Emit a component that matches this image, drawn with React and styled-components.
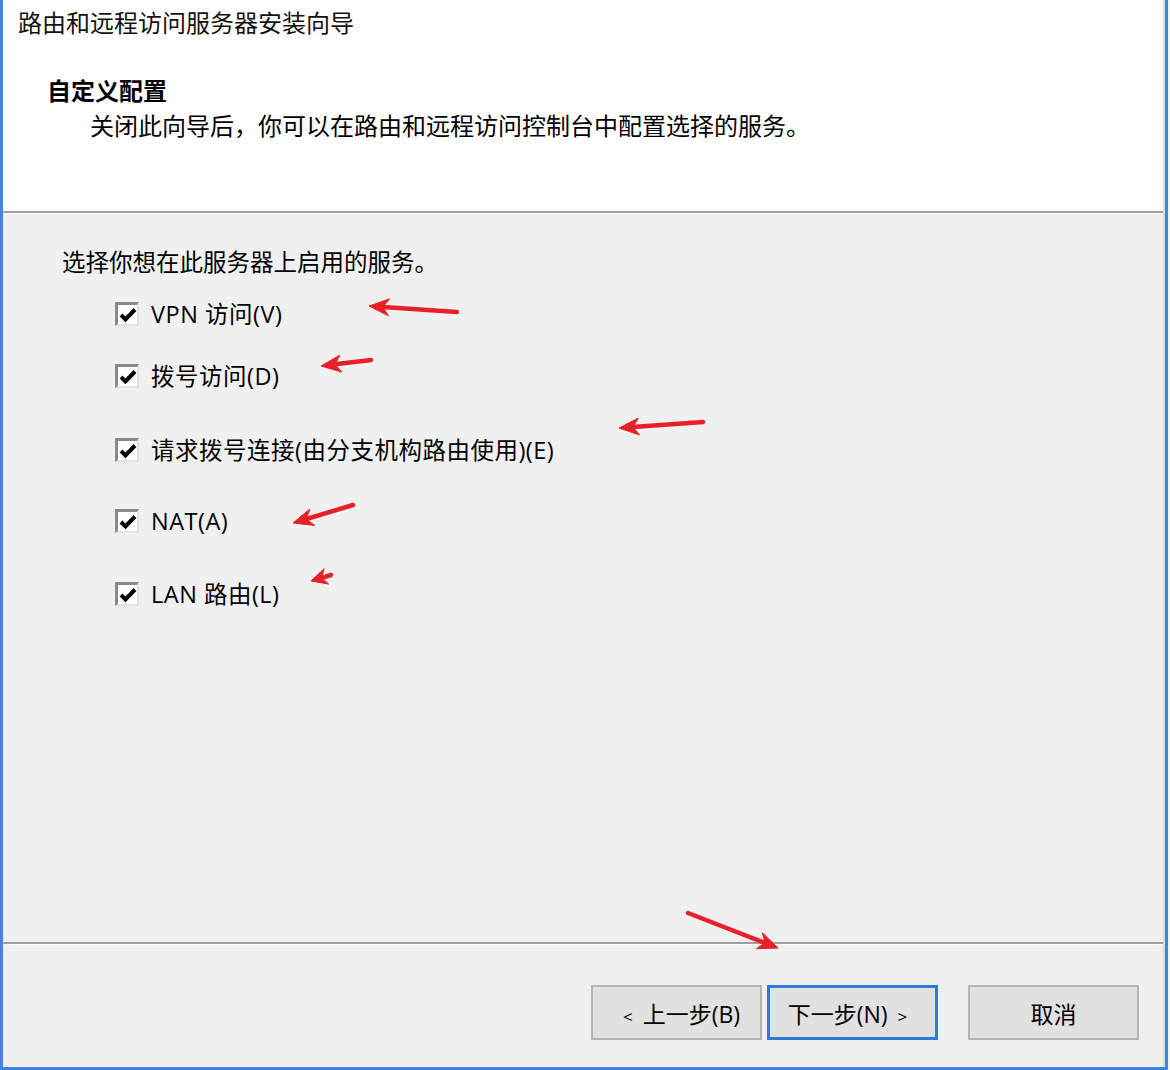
import React from "react";
import styled, { createGlobalStyle } from "styled-components";

const GlobalStyle = createGlobalStyle`
  * {
    box-sizing: border-box;
  }
  html, body {
    margin: 0;
    padding: 0;
    background: #f4f4f4;
  }
  body {
    font-family: "Open Sans", "Noto Sans CJK SC", sans-serif;
    color: #000;
  }
`;

/* 窗口外框 */
const Window = styled.div`
  position: relative;
  width: 1168px;
  height: 1070px;
  display: flex;
  flex-direction: column;
  border-left: 3px solid #3f86dc;
  border-right: 3px solid #3f86dc;
  border-bottom: 3px solid #3f86dc;
  background: #f0f0f0;
`;

const Inner = styled.div`
  flex: 1;
  display: flex;
  flex-direction: column;
  border-right: 2px solid #dcdcdc;
`;

/* 上部白色区域 */
const Header = styled.header`
  height: 211px;
  background: #fff;
  padding: 8px 0 0 15px;
  font-size: 24px;
  line-height: 30px;

  .title {
    color: #111;
  }

  h2 {
    margin: 38px 0 0 29px;
    font-size: 24px;
    font-weight: bold;
    line-height: 30px;
  }

  p {
    margin: 5px 0 0 72px;
  }
`;

const Divider = styled.div`
  height: 3px;
  border-top: 2px solid #a0a0a0;
  border-bottom: 1px solid #fff;
`;

const Body = styled.main`
  flex: 1;
  padding: 33px 0 0 59px;
  font-size: 23.5px;
  line-height: 30px;
`;

const Row = styled.label`
  display: flex;
  align-items: center;
  gap: 12px;
  margin: ${(p) => p.$top}px 0 0 53px;
  height: 30px;
  letter-spacing: 0.5px;
`;

const Box = styled.span`
  width: 24px;
  height: 24px;
  display: flex;
  align-items: center;
  justify-content: center;
  background: #fff;
  border-top: 3px solid #8a8a8a;
  border-left: 3px solid #8a8a8a;
  border-right: 2px solid #e3e3e3;
  border-bottom: 2px solid #e3e3e3;
`;

const Footer = styled.footer`
  height: 122px;
  display: flex;
  justify-content: flex-end;
  align-items: flex-start;
  padding: 40px 24px 0 0;
`;

const Button = styled.button`
  width: 171px;
  height: 55px;
  margin-left: ${(p) => p.$gap}px;
  background: #e1e1e1;
  border: ${(p) => (p.$primary ? "3px solid #2f7ad6" : "2px solid #b4b4b4")};
  font-family: inherit;
  font-size: 23px;
  color: #000;
  padding: 0;

  .angle {
    font-size: 17px;
    margin: 0 10px;
  }
`;

const Notes = styled.svg`
  position: absolute;
  left: -3px;
  top: 0;
  pointer-events: none;
`;

function Check() {
  return (
    <Box>
      <svg width="18" height="16" viewBox="0 0 18 16">
        <path d="M2 8 L6.5 12.5 L16 2.5" fill="none" stroke="#000" strokeWidth="4" />
      </svg>
    </Box>
  );
}

function Arrow({ x1, y1, x2, y2, head = 20, w = 8.5 }) {
  const dx = x2 - x1;
  const dy = y2 - y1;
  const len = Math.hypot(dx, dy);
  const ux = dx / len;
  const uy = dy / len;
  const px = -uy;
  const py = ux;
  const bx = x2 - ux * head;
  const by = y2 - uy * head;
  const nx = x2 - ux * head * 0.7;
  const ny = y2 - uy * head * 0.7;
  const pts = [
    [x2, y2],
    [bx + px * w, by + py * w],
    [nx, ny],
    [bx - px * w, by - py * w],
  ]
    .map((p) => p.join(","))
    .join(" ");
  return (
    <g fill="#e8202a" stroke="#e8202a">
      {len > head && (
        <line x1={x1} y1={y1} x2={nx} y2={ny} strokeWidth="4.5" strokeLinecap="round" />
      )}
      <polygon points={pts} strokeWidth="1" strokeLinejoin="round" />
    </g>
  );
}

const services = [
  { top: 22, text: "VPN 访问(V)" },
  { top: 32, text: "拨号访问(D)" },
  { top: 44, text: "请求拨号连接(由分支机构路由使用)(E)" },
  { top: 41, text: "NAT(A)" },
  { top: 43, text: "LAN 路由(L)" },
];

export default function App() {
  return (
    <>
      <GlobalStyle />
      <Window>
        <Inner>
          <Header>
            <div className="title">路由和远程访问服务器安装向导</div>
            <h2>自定义配置</h2>
            <p>关闭此向导后，你可以在路由和远程访问控制台中配置选择的服务。</p>
          </Header>
          <Divider />
          <Body>
            <div>选择你想在此服务器上启用的服务。</div>
            {services.map((s) => (
              <Row key={s.text} $top={s.top}>
                <Check />
                <span>{s.text}</span>
              </Row>
            ))}
          </Body>
          <Divider />
          <Footer>
            <Button $gap={0}>
              <span className="angle">&lt;</span>上一步(B)
            </Button>
            <Button $gap={5} $primary>
              下一步(N)<span className="angle">&gt;</span>
            </Button>
            <Button $gap={30}>取消</Button>
          </Footer>
        </Inner>

        {/* 红色标注箭头 */}
        <Notes width="1170" height="1070">
          <Arrow x1={457} y1={312} x2={369} y2={306} />
          <Arrow x1={371} y1={360} x2={321} y2={366} />
          <Arrow x1={703} y1={422} x2={619} y2={428} />
          <Arrow x1={353} y1={505} x2={293} y2={523} />
          <Arrow x1={331} y1={575} x2={311} y2={581} head={16} w={8} />
          <Arrow x1={688} y1={913} x2={778} y2={948} />
        </Notes>
      </Window>
    </>
  );
}
